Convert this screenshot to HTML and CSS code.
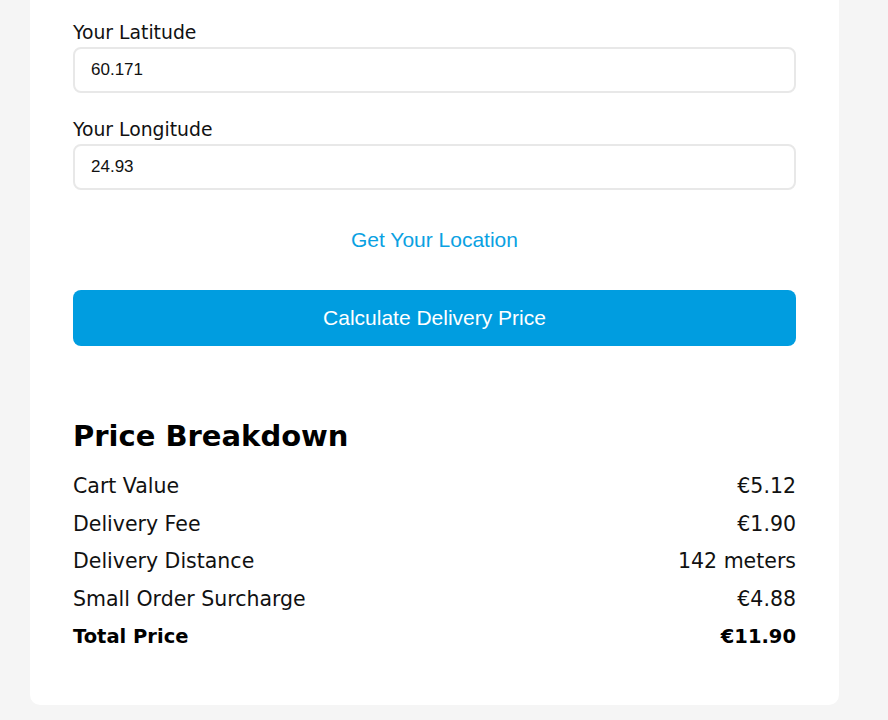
FILE: index.html
```html
<!DOCTYPE html>
<html lang="en">
<head>
<meta charset="utf-8">
<title>Delivery Fee Calculator</title>
<link rel="stylesheet" href="styles.css">
</head>
<body>
<main class="card">
  <form class="form">
    <div class="field">
      <label class="label" for="lat">Your Latitude</label>
      <input class="input" id="lat" type="text" value="60.171">
    </div>
    <div class="field">
      <label class="label" for="lon">Your Longitude</label>
      <input class="input" id="lon" type="text" value="24.93">
    </div>
    <div class="link-row"><button type="button" class="link">Get Your Location</button></div>
    <button type="button" class="primary">Calculate Delivery Price</button>
  </form>
  <section class="breakdown">
    <h2 class="title">Price Breakdown</h2>
    <div class="row"><span>Cart Value</span><span>€5.12</span></div>
    <div class="row"><span>Delivery Fee</span><span>€1.90</span></div>
    <div class="row"><span>Delivery Distance</span><span>142 meters</span></div>
    <div class="row"><span>Small Order Surcharge</span><span>€4.88</span></div>
    <div class="row total"><span>Total Price</span><span>€11.90</span></div>
  </section>
</main>
</body>
</html>
```
FILE: styles.css
```css
html, body {
  margin: 0;
  padding: 0;
  background: #f5f5f5;
}
body {
  font-family: "DejaVu Sans", sans-serif;
  color: #111;
}
.card {
  box-sizing: border-box;
  width: 809px;
  margin: -20px 0 0 30px;
  padding: 41px 43px 49px;
  background: #fff;
  border-radius: 10px;
}
.form {
  display: flex;
  flex-direction: column;
}
.field {
  display: flex;
  flex-direction: column;
  gap: 2px;
  margin-bottom: 25px;
}
.field + .field {
  margin-bottom: 38px;
}
.label {
  font-size: 18.8px;
  line-height: 24px;
  color: #111;
}
.input {
  box-sizing: border-box;
  height: 46px;
  width: 100%;
  padding: 0 16px;
  border: 2px solid #e8e8e8;
  border-radius: 8px;
  font-family: "Liberation Sans", Arial, sans-serif;
  font-size: 17px;
  color: #111;
  outline: none;
}
.link-row {
  display: flex;
  justify-content: center;
  margin-bottom: 38px;
}
.link {
  border: 0;
  background: none;
  padding: 0;
  font-family: "Liberation Sans", Arial, sans-serif;
  font-size: 21px;
  line-height: 24px;
  color: #0aa1e2;
  cursor: pointer;
}
.primary {
  height: 56px;
  border: 0;
  border-radius: 8px;
  background: #009de0;
  color: #fff;
  font-family: "Liberation Sans", Arial, sans-serif;
  font-size: 21px;
  cursor: pointer;
}
.breakdown {
  margin-top: 70px;
}
.title {
  margin: 0 0 12px;
  font-size: 29px;
  line-height: 40px;
  font-weight: 700;
  color: #000;
}
.row {
  display: flex;
  justify-content: space-between;
  font-size: 20.5px;
  line-height: 37.5px;
  color: #111;
}
.total {
  font-size: 19.5px;
  font-weight: 700;
  color: #000;
}
```
